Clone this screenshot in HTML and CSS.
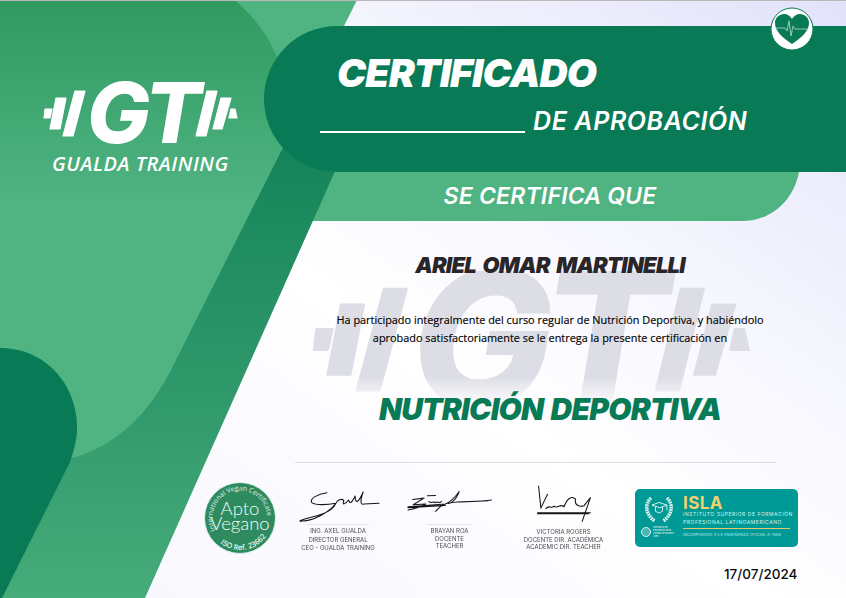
FILE: index.html
```html
<!DOCTYPE html>
<html lang="es">
<head>
<meta charset="utf-8">
<title>Certificado</title>
<link rel="stylesheet" href="styles.css">
</head>
<body>
<main class="cert">
  <svg class="shapes" viewBox="0 0 846 598" aria-hidden="true">
    <defs>
      <linearGradient id="band" gradientUnits="userSpaceOnUse" x1="0" y1="150" x2="0" y2="598">
        <stop offset="0" stop-color="#15845a"/><stop offset="1" stop-color="#46ab7a"/>
      </linearGradient>
      <linearGradient id="top" gradientUnits="userSpaceOnUse" x1="0" y1="0" x2="0" y2="200">
        <stop offset="0" stop-color="#2f9a60"/><stop offset="1" stop-color="#4fb382"/>
      </linearGradient>
    </defs>
    <path class="light" d="M300 172H799C793 202 770 221 742 221H300Z"/>
    <path fill="url(#band)" d="M389 50L145 598H0V50Z"/>
    <path class="light" d="M0 0H357L170 372C145 420 110 448 72 458L0 475Z"/>
    <path fill="url(#top)" d="M0 0H235C255 18 270 38 278 60L285 142L256 200H0Z"/>
    <path class="dark" d="M0 348C45 348 77 384 77 428C77 440 74 450 70 462L2 598H0Z"/>
    <path class="dark" d="M337 26H846V172H337A73 73 0 0 1 337 26Z"/>
  </svg>

  <section class="brand">
    <div class="mark">
      <svg class="plates" viewBox="0 0 43 60" aria-hidden="true">
        <path d="M2 26H9L7 35H1ZM13 15H23L17 46H7ZM32 8H42L30 53H20Z"/>
      </svg>
      <span class="gt">GT</span>
      <svg class="plates" viewBox="0 0 43 60" aria-hidden="true">
        <path d="M12 8H22L11 53H1ZM26 15H36L27 46H18ZM36 26H40L42 35H34Z"/>
      </svg>
    </div>
    <p class="brand-name">GUALDA TRAINING</p>
  </section>

  <section class="body">
    <div class="watermark" aria-hidden="true">
      <div class="mark">
        <svg class="plates" viewBox="0 0 43 60"><path d="M2 26H9L7 35H1ZM13 15H23L17 46H7ZM32 8H42L30 53H20Z"/></svg>
        <span class="gt">GT</span>
        <svg class="plates" viewBox="0 0 43 60"><path d="M12 8H22L11 53H1ZM26 15H36L27 46H18ZM36 26H40L42 35H34Z"/></svg>
      </div>
    </div>
    <header class="head">
      <h1 class="title">CERTIFICADO</h1>
      <div class="sub"><span class="blank"></span><span>DE APROBACIÓN</span></div>
    </header>
    <p class="certifies">SE CERTIFICA QUE</p>
    <h2 class="name">ARIEL OMAR MARTINELLI</h2>
    <p class="copy">Ha participado integralmente del curso regular de Nutrición Deportiva, y habiéndolo<br>aprobado satisfactoriamente se le entrega la presente certificación en</p>
    <h2 class="course">NUTRICIÓN DEPORTIVA</h2>
    <hr class="rule">
  </section>

  <footer class="foot">
    <svg class="seal" viewBox="0 0 72 72" role="img" aria-label="Apto Vegano">
      <defs>
        <path id="arcTop" d="M12 49A27.300 27.300 0 1 1 63 39"/>
        <path id="arcBot" d="M9.500 54A32 32 0 0 0 62.500 54"/>
      </defs>
      <circle class="seal-bg" cx="36" cy="36" r="35.500"/>
      <circle class="seal-ring" cx="36" cy="36" r="33.500"/>
      <text class="seal-small"><textPath href="#arcTop" startOffset="1">International Vegan Certificate</textPath></text>
      <text class="seal-small seal-bold"><textPath href="#arcBot" startOffset="10">ISO Ref. 23662</textPath></text>
      <text class="seal-big" x="36" y="33">Apto</text>
      <text class="seal-big" x="36" y="48">Vegano</text>
    </svg>

    <figure class="sign">
      <svg class="sign-ink" viewBox="10 25 260 105" aria-hidden="true">
        <path d="M105 36C78 40 52 54 60 66C72 75 110 72 132 68C125 88 92 102 58 110C30 116 16 124 30 121C62 122 112 96 132 68C136 58 150 52 156 60C150 74 160 72 170 58C175 72 180 66 190 46C190 72 200 66 214 34C205 60 205 74 216 70L262 68"/>
      </svg>
      <figcaption class="sign-text"><span class="sign-line short"></span>ING. AXEL GUALDA<br>DIRECTOR GENERAL<br>CEO - GUALDA TRAINING</figcaption>
    </figure>
    <figure class="sign">
      <svg class="sign-ink" viewBox="350 25 265 105" aria-hidden="true">
        <path d="M370 56L405 52L372 72L410 70C392 80 372 86 356 88M356 78L470 70M356 81L470 74M415 45L440 44M420 62C425 70 435 60 440 66C445 58 450 72 458 62M440 92C452 80 462 70 470 70C490 62 505 42 512 32C505 52 490 70 478 68C520 58 560 66 610 58M520 64L600 60"/>
      </svg>
      <figcaption class="sign-text tight"><span class="sign-line tiny"></span>BRAYAN ROA<br>DOCENTE<br>TEACHER</figcaption>
    </figure>
    <figure class="sign sign-tall">
      <svg class="sign-ink" viewBox="720 12 210 118" aria-hidden="true">
        <path d="M748 15L755 82L775 40M745 96L905 96M745 99L900 99M770 84C780 70 785 86 795 76C805 86 815 66 825 78C835 50 850 44 860 55C855 70 870 80 885 75L905 50L880 122"/>
      </svg>
      <figcaption class="sign-text tight">VICTORIA ROGERS<br>DOCENTE DIR. ACADÉMICA<br>ACADEMIC DIR. TEACHER</figcaption>
    </figure>

    <div class="isla">
      <div class="isla-icons">
        <svg class="wreath" viewBox="0 0 34 30" aria-hidden="true">
          <path class="wreath-leaf" d="M8 2C1 8 1 20 12 28M26 2C33 8 33 20 22 28"/>
          <path class="wreath-cap" d="M9 10L17 7L26 10L18 13ZM13 12V17L17 19L21 17V12M26 10V16"/>
        </svg>
        <div class="isla-min">
          <span class="isla-dot"></span>
          <span class="isla-min-text">Ministerio de Educación de la Ciudad de Buenos Aires</span>
        </div>
      </div>
      <div class="isla-info">
        <strong class="isla-name">ISLA</strong>
        <span class="isla-line">INSTITUTO SUPERIOR DE FORMACIÓN</span>
        <span class="isla-line">PROFESIONAL LATINOAMERICANO</span>
        <span class="isla-foot">INCORPORADO A LA ENSEÑANZA OFICIAL A-1560</span>
      </div>
    </div>
  </footer>
  <time class="date">17/07/2024</time>

  <div class="badge">
    <svg viewBox="0 0 44 44" aria-hidden="true">
      <circle class="badge-bg" cx="22" cy="22" r="21"/>
      <path class="badge-heart" d="M22 37C12 30 5 24 5 16C5 10.500 9.500 7 14 7C17.500 7 20.500 9 22 12C23.500 9 26.500 7 30 7C34.500 7 39 10.500 39 16C39 24 32 30 22 37Z"/>
      <path class="badge-pulse" d="M5 21H15L17 24L19 14L21 29L23 19L25 22H39"/>
    </svg>
  </div>
</main>
</body>
</html>
```
FILE: styles.css
```css
* { box-sizing: border-box; }
html, body { margin: 0; padding: 0; }
body { width: 846px; height: 598px; overflow: hidden; background: #fff; }

.cert {
  position: relative;
  width: 846px;
  height: 598px;
  overflow: hidden;
  border-top: 1px solid #b9b9b9;
  display: grid;
  grid-template-columns: 254px 592px;
  grid-template-rows: 462px 1fr;
  background: linear-gradient(215deg, #e2e2fa 0%, #f6f6fe 32%, #ffffff 55%, #fbfbff 72%, #f6f6fd 100%);
  font-family: Inter, "Open Sans", sans-serif;
}
.shapes { position: absolute; left: 0; top: -1px; width: 846px; height: 598px; }
.light { fill: #4fb382; }
.dark { fill: #087a55; }

/* brand logo */
.brand { position: relative; padding: 82px 0 0 43px; color: #fff; }
.mark {
  display: flex;
  align-items: center;
  font-size: 84px;
  height: .714em;
  color: #fff;
  fill: currentColor;
}
.plates { width: .512em; height: .714em; flex: none; stroke: currentColor; stroke-width: 1.2; stroke-linejoin: round; }
.gt { font-weight: 800; font-style: italic; line-height: .714em; margin: 0 -.04em 0 .01em; letter-spacing: -.035em; }
.brand-name {
  margin: 11px 0 0 9px;
  font-family: "Open Sans", sans-serif;
  font-size: 20px;
  line-height: 20px;
  font-weight: 600;
  font-style: italic;
  letter-spacing: .55px;
  white-space: nowrap;
}

/* main column */
.body { position: relative; display: flex; flex-direction: column; align-items: center; }
.watermark {
  position: absolute;
  left: 58px;
  top: 270px;
  -webkit-mask-image: linear-gradient(#000 78%, transparent 100%);
  mask-image: linear-gradient(#000 78%, transparent 100%);
}
.watermark .mark {
  font-size: 189px;
  color: #dddde6;
}
.head { position: relative; width: 100%; height: 146px; margin-top: 25px; padding: 25px 0 0 83px; color: #fff; }
.title { margin: 0; font-size: 39px; line-height: 44px; font-weight: 900; font-style: italic; letter-spacing: -.9px; color: #fff; }
.sub { display: flex; align-items: flex-end; gap: 8px; margin: 10px 0 0 -17px; font-size: 25px; line-height: 32px; font-weight: 600; font-style: italic; letter-spacing: .6px; }
.blank { width: 205px; height: 2px; margin-bottom: 4px; background: #fff; }
.certifies { position: relative; margin: 0; height: 49px; font-size: 23px; line-height: 49px; font-weight: 600; font-style: italic; letter-spacing: .2px; color: #fff; }
.name { position: relative; margin: 30px 0 0; font-size: 22px; line-height: 28px; font-weight: 900; font-style: italic; letter-spacing: -.8px; word-spacing: 3px; color: #2a2528; }
.copy { position: relative; margin: 32px 0 0; font-family: "Open Sans", sans-serif; font-size: 10.900px; line-height: 18px; font-weight: 500; color: #000; text-align: center; -webkit-text-stroke: .15px #000; }
.course { position: relative; margin: 44px 0 0; font-size: 30px; line-height: 36px; font-weight: 900; font-style: italic; letter-spacing: -.8px; word-spacing: 2px; color: #087a55; }
.rule { position: absolute; left: 41px; right: 69px; bottom: 0; margin: 0; border: 0; border-top: 1px solid #dedee2; }

/* footer */
.foot {
  position: relative;
  grid-column: 1 / -1;
  display: grid;
  grid-template-columns: 78px 112px 111px 130px 163px;
  align-items: start;
  margin: 20px 0 0 204px;
  width: 594px;
}
.seal { width: 72px; height: 72px; margin-top: -1px; }
.seal-bg { fill: #2e8b60; stroke: #dfeee7; stroke-width: 1; }
.seal-ring { fill: none; stroke: #2e8b60; }
.seal-small { fill: #e4f2ea; font-size: 6.800px; font-family: "Open Sans", sans-serif; }
.seal-bold { font-size: 7.500px; font-weight: 600; }
.seal-big { fill: #f4fbf7; font-size: 18.500px; font-family: Lato, "Open Sans", sans-serif; font-weight: 300; text-anchor: middle; }

.sign { margin: 0; display: flex; flex-direction: column; align-items: center; }
.sign-ink { width: 87px; height: 35px; margin-top: 6px; fill: none; stroke: #15151a; stroke-width: 3.200px; stroke-linecap: round; stroke-linejoin: round; }
.sign-tall { padding-right: 13px; }
.sign-tall .sign-ink { width: 70px; margin-top: 2px; height: 39px; }
.sign-text { position: relative; text-align: center; font-size: 6px; line-height: 8.500px; color: #4a4a50; white-space: nowrap; filter: blur(.25px); }
.sign-text.tight { line-height: 7.500px; }
.sign-tall .sign-text { padding-top: 4px; }
.sign-line { display: block; height: 1px; margin: 0 auto 2px; background: #e4e4e8; }
.sign-line.short { width: 62px; }
.sign-line.tiny { width: 45px; }

.isla {
  display: flex;
  width: 163px;
  height: 58px;
  margin-top: 6px;
  padding: 7px 8px 6px 6px;
  gap: 7px;
  border-radius: 5px;
  background: #009a96;
  color: #d6f0ee;
}
.isla-icons { width: 35px; display: flex; flex-direction: column; align-items: center; gap: 3px; flex: none; }
.wreath { width: 30px; height: 27px; fill: none; }
.wreath-leaf { stroke: #dff3f0; stroke-width: 4; stroke-dasharray: 2 .8; }
.wreath-cap { stroke: #eefafa; stroke-width: 1; }
.isla-min { display: flex; align-items: center; gap: 2px; align-self: stretch; }
.isla-dot { width: 10px; height: 10px; flex: none; border-radius: 50%; background: #4eb6b2; border: 1px solid #dff3f0; }
.isla-min-text { font-size: 2.400px; line-height: 3px; color: #eefafa; }
.isla-info { display: flex; flex-direction: column; min-width: 0; }
.isla-name { font-size: 17px; line-height: 14px; font-weight: 700; color: #f4cf6e; letter-spacing: .4px; }
.isla-line { font-size: 5px; line-height: 8px; letter-spacing: .55px; white-space: nowrap; }
.isla-foot { margin-top: 2px; padding-top: 4px; border-top: 1px solid #e3c873; font-size: 3.600px; line-height: 5px; letter-spacing: .28px; white-space: nowrap; }

.date { position: absolute; left: 724px; top: 566px; font-size: 13.500px; line-height: 15px; font-weight: 500; color: #0a0a0a; }

.badge { position: absolute; left: 770px; top: 6px; width: 44px; height: 44px; }
.badge svg { display: block; width: 44px; height: 44px; }
.badge-bg { fill: #fff; stroke: #087a55; stroke-width: 1; }
.badge-heart { fill: #087a55; }
.badge-pulse { fill: none; stroke: #b6dccb; stroke-width: .8; }
```
